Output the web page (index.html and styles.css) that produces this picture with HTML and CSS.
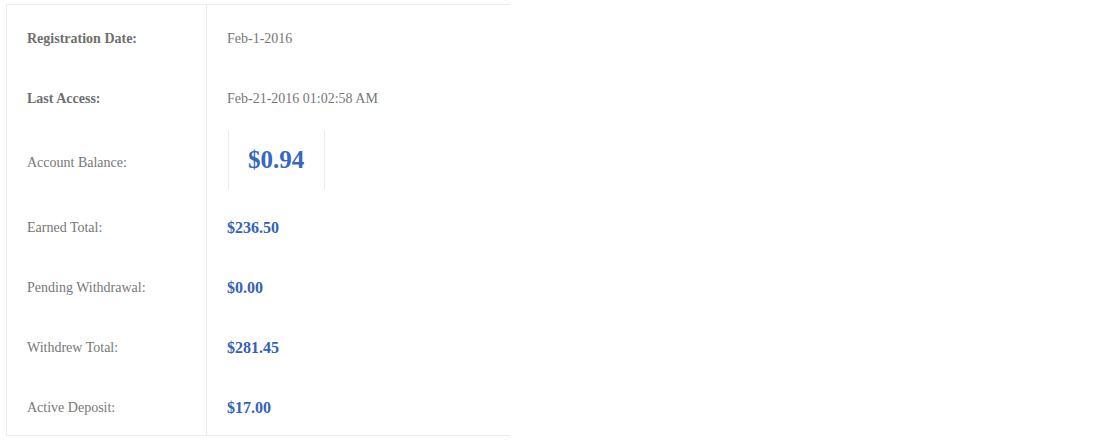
FILE: index.html
```html
<!DOCTYPE html>
<html lang="en">
<head>
<meta charset="utf-8">
<title>Account</title>
<link rel="stylesheet" href="styles.css">
</head>
<body>
<div class="info">
  <div class="row">
    <div class="label strong">Registration Date:</div>
    <div class="value plain">Feb-1-2016</div>
  </div>
  <div class="row">
    <div class="label strong">Last Access:</div>
    <div class="value plain">Feb-21-2016 01:02:58 AM</div>
  </div>
  <div class="row row-balance">
    <div class="label label-balance">Account Balance:</div>
    <div class="value value-balance"><div class="balance">$0.94</div></div>
  </div>
  <div class="row">
    <div class="label">Earned Total:</div>
    <div class="value money">$236.50</div>
  </div>
  <div class="row">
    <div class="label">Pending Withdrawal:</div>
    <div class="value money">$0.00</div>
  </div>
  <div class="row">
    <div class="label">Withdrew Total:</div>
    <div class="value money">$281.45</div>
  </div>
  <div class="row row-last">
    <div class="label">Active Deposit:</div>
    <div class="value money">$17.00</div>
  </div>
</div>
</body>
</html>
```
FILE: styles.css
```css
html, body {
  margin: 0;
  padding: 0;
  background: #fff;
}
body {
  font-family: "Liberation Serif", "Times New Roman", serif;
  font-size: 14px;
  color: #777;
}
.info {
  margin: 4px 0 0 6px;
  width: 504px;
  box-sizing: border-box;
  border: 1px solid #ececec;
  border-right: none;
}
.row {
  display: grid;
  grid-template-columns: 200px 1fr;
  height: 60px;
}
.row-balance {
  height: 69px;
}
.row-last {
  height: 61px;
}
.label, .value {
  line-height: 20px;
  padding-top: 24px;
}
.label {
  box-sizing: border-box;
  border-right: 1px solid #ececec;
  padding-left: 20px;
  color: #777;
}
.label.strong {
  font-weight: bold;
  color: #6f6f6f;
}
.label-balance {
  padding-top: 28px;
}
.value {
  padding-left: 20px;
}
.value.plain {
  color: #777;
}
.value.money {
  color: #3462b8;
  font-weight: bold;
  font-size: 16px;
}
.value-balance {
  padding-top: 5px;
  padding-left: 21px;
}
.balance {
  display: inline-flex;
  align-items: center;
  height: 60px;
  padding: 0 20px 0 19px;
  border-left: 1px solid #ececec;
  border-right: 1px solid #ececec;
  color: #3468c2;
  font-weight: bold;
  font-size: 25px;
}
```
